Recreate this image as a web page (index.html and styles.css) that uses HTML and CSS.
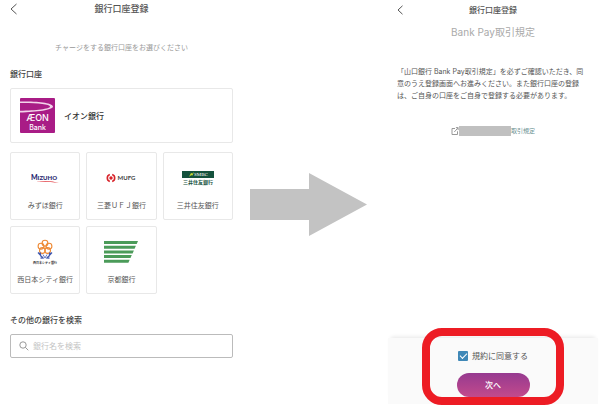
FILE: index.html
```html
<!DOCTYPE html>
<html lang="ja">
<head>
    <meta charset="UTF-8">
    <meta name="viewport" content="width=device-width, initial-scale=1.0">
    <title>銀行口座登録</title>
    <link rel="stylesheet" href="styles.css">
</head>
<body>
    <main class="steps">
        <section class="screen select">
            <header class="bar">
                <button class="back" type="button" aria-label="戻る">
                    <svg width="8" height="12" viewBox="0 0 8 12"><path d="M6.500 1 1 6l5.500 5"/></svg>
                </button>
                <h1 class="title">銀行口座登録</h1>
            </header>
            <p class="lead">チャージをする銀行口座をお選びください</p>

            <h2 class="heading">銀行口座</h2>
            <button class="card main-bank" type="button">
                <svg width="35" height="35" viewBox="0 0 35 35">
                    <rect width="35" height="35" rx="1" fill="#a91c86"/>
                    <path d="M0 3.500C18 3 33 5 33 8.500S17 14 0 14.500v-1.800C16 12.500 30 11 30 8.500S16 4.800 0 5z" fill="#f3d3ea"/>
                    <text x="17.500" y="23" class="logo-aeon">ÆON</text>
                    <text x="17.500" y="32" class="logo-bank">Bank</text>
                </svg>
                <span>イオン銀行</span>
            </button>

            <div class="banks">
                <button class="card bank" type="button">
                    <svg width="30" height="10" viewBox="0 0 30 10">
                        <text x="14" y="7" class="logo-mizuho"><tspan class="cap">M</tspan>IZUHO</text>
                        <path d="M6 9C13 7.300 22 7.500 29 10 21 8.800 13 8.500 6 9z" fill="#e0343a"/>
                    </svg>
                    <span>みずほ銀行</span>
                </button>
                <button class="card bank" type="button">
                    <svg width="32" height="10" viewBox="0 0 32 10">
                        <g fill="none" stroke="#d8232a" stroke-width="1.600">
                            <path d="M4.800 1.500a3.700 3.700 0 0 0 0 7"/>
                            <path d="M7.200 1.500a3.700 3.700 0 0 1 0 7"/>
                        </g>
                        <circle cx="6" cy="5" r="1.700" fill="#d8232a"/>
                        <text x="12.500" y="7.200" class="logo-mufg">MUFG</text>
                    </svg>
                    <span>三菱ＵＦＪ銀行</span>
                </button>
                <button class="card bank" type="button">
                    <svg width="34" height="16" viewBox="0 0 34 16">
                        <rect x="1" y="1" width="32" height="7" fill="#14523d"/>
                        <path d="M8 6.800 10 3l1.500.5L13 2l-1.500 3.500-1.300-.3z" fill="#c5d82f"/>
                        <text x="13" y="6.300" class="logo-smbc">SMBC</text>
                        <text x="17" y="14.200" class="logo-smbc-ja">三井住友銀行</text>
                    </svg>
                    <span>三井住友銀行</span>
                </button>
                <button class="card bank" type="button">
                    <svg width="30" height="26" viewBox="0 0 30 26">
                        <g fill="none" stroke="#ee8a35" stroke-width="1.100">
                            <circle cx="15" cy="4.200" r="2.900"/>
                            <circle cx="19" cy="7.200" r="2.900"/>
                            <circle cx="17.600" cy="11.500" r="2.900"/>
                            <circle cx="12.400" cy="11.500" r="2.900"/>
                            <circle cx="11" cy="7.200" r="2.900"/>
                        </g>
                        <g fill="none" stroke="#3f58b0">
                            <path d="M8 13.500 13 19l-2.500.2M10 13.500l1 4M22 13.500 17 19l2.500.2M20 13.500l-1 4" stroke-width="1.300"/>
                            <path d="M13 15.500l2 3.500 2-3.500" stroke-width=".8"/>
                        </g>
                        <text x="15" y="24.500" class="logo-ncb">西日本シティ銀行</text>
                    </svg>
                    <span>西日本シティ銀行</span>
                </button>
                <button class="card bank" type="button">
                    <svg width="34" height="22" viewBox="0 0 34 22">
                        <path d="M0 0h34l-1.300 3H0zM0 4.700h31.900l-1.300 3H0zM0 9.400h29.900l-1.300 3H0zM0 14.100h27.800l-1.300 3H0zM0 18.800h25.700l-1.300 3H0z" fill="#4b9b59"/>
                    </svg>
                    <span>京都銀行</span>
                </button>
            </div>

            <label class="heading" for="bank-name">その他の銀行を検索</label>
            <div class="search">
                <svg width="10" height="10" viewBox="0 0 10 10"><circle cx="4" cy="4" r="3.200"/><path d="m6.300 6.300 3 3"/></svg>
                <input id="bank-name" type="text" placeholder="銀行名を検索">
            </div>
        </section>

        <svg class="arrow" width="117" height="63" viewBox="0 0 117 63">
            <path d="M0 16h59V0l58 31.500L59 63V47H0z"/>
        </svg>

        <section class="screen terms">
            <header class="bar">
                <button class="back" type="button" aria-label="戻る">
                    <svg width="7" height="10" viewBox="0 0 7 10"><path d="M5.500.8 1 5l4.500 4.200"/></svg>
                </button>
                <h1 class="title">銀行口座登録</h1>
            </header>
            <h2 class="terms-title">Bank Pay取引規定</h2>
            <p class="terms-text">「山口銀行 Bank Pay取引規定」を必ずご確認いただき、同意のうえ登録画面へお進みください。また銀行口座の登録は、ご自身の口座をご自身で登録する必要があります。</p>
            <a class="terms-link" href="#">
                <svg width="8" height="8" viewBox="0 0 8 8"><path d="M4 1.500H1v6h5.500V4.300M3.300 5 7 .8M4.900.6h2.200v2.500"/></svg>
                <span class="masked"></span>取引規定
            </a>

            <footer class="agree">
                <label class="check"><input type="checkbox" checked>規約に同意する</label>
                <button class="next" type="button">次へ</button>
                <div class="highlight"></div>
            </footer>
        </section>
    </main>
</body>
</html>
```

FILE: styles.css
```css
* {
    margin: 0;
    padding: 0;
    box-sizing: border-box;
}

body {
    font-family: Inter, "Noto Sans CJK JP", sans-serif;
    font-size: 7px;
    line-height: 12px;
    background: #fff;
    color: #555;
}

button,
input {
    font: inherit;
    color: inherit;
}

button {
    border: none;
    background: none;
    cursor: pointer;
}

svg {
    display: block;
    flex-shrink: 0;
}

.steps {
    display: grid;
    grid-template-columns: 223fr 121px 210fr;
    column-gap: 17px;
    min-height: 100vh;
    padding: 0 2px 0 10px;
}

.screen {
    display: flex;
    flex-direction: column;
    min-width: 0;
}

/* header */
.bar {
    display: grid;
    grid-template-columns: 12px 1fr 12px;
    align-items: center;
    padding-top: 3px;
}

.back path {
    fill: none;
    stroke: #555;
}

.title {
    font-size: 9px;
    font-weight: 500;
    text-align: center;
}

/* bank list */
.lead {
    margin-top: 27px;
    text-align: center;
    color: #999;
}

.heading {
    font-size: 8px;
    font-weight: 500;
    color: #444;
    margin-top: 14px;
    margin-bottom: 8px;
}

.card {
    border: 1px solid #e8e8e8;
    border-radius: 2px;
    background: #fff;
}

.main-bank {
    display: flex;
    align-items: center;
    gap: 9px;
    height: 55px;
    padding: 0 9px;
    font-size: 8px;
    font-weight: 500;
    color: #333;
}

.banks {
    display: grid;
    grid-template-columns: repeat(3, 1fr);
    gap: 6px;
    margin-top: 9px;
    margin-bottom: 6px;
}

.bank {
    display: grid;
    grid-template-rows: 28px 12px;
    align-items: center;
    justify-items: center;
    align-content: start;
    gap: 8px;
    height: 68px;
    padding-top: 11px;
    white-space: nowrap;
}

.search {
    display: flex;
    align-items: center;
    gap: 4px;
    height: 24px;
    padding: 0 8px;
    border: 1px solid #bbb;
    border-radius: 2px;
}

.search svg {
    fill: none;
    stroke: #999;
}

.search input {
    flex: 1;
    min-width: 0;
    border: none;
    outline: none;
    background: none;
    font-size: 8px;
}

.search input::placeholder {
    color: #c4c4c4;
}

/* logos */
.logo-aeon,
.logo-bank {
    fill: #fff;
    font-family: Inter, sans-serif;
    text-anchor: middle;
}

.logo-aeon {
    font-size: 9px;
}

.logo-bank {
    font-size: 7px;
    font-weight: 500;
}

.logo-mizuho {
    font-family: Lato, sans-serif;
    font-size: 6px;
    font-weight: 900;
    fill: #27276f;
    text-anchor: middle;
}

.logo-mizuho .cap {
    font-size: 7px;
}

.logo-mufg {
    font-family: Lato, sans-serif;
    font-size: 6px;
    font-weight: 700;
    fill: #444;
}

.logo-smbc {
    font-family: "Liberation Serif", serif;
    font-size: 5px;
    fill: #fff;
}

.logo-smbc-ja {
    font-size: 5px;
    font-weight: 700;
    fill: #14523d;
    text-anchor: middle;
}

.logo-ncb {
    font-size: 3px;
    font-weight: 700;
    fill: #333;
    text-anchor: middle;
}

.arrow {
    margin-top: 173px;
    fill: #c3c3c3;
}

/* terms */
.terms .bar {
    padding: 4px 9px 0;
}

.terms .title {
    font-size: 8px;
}

.terms-title {
    margin-top: 9px;
    font-size: 10px;
    line-height: 14px;
    font-weight: 400;
    text-align: center;
    color: #aaa;
}

.terms-text {
    margin-top: 27px;
    padding: 0 13px 0 9px;
}

.terms-link {
    display: flex;
    align-items: center;
    justify-content: center;
    margin-top: 23px;
    font-size: 6px;
    color: #6c9292;
    text-decoration: none;
}

.terms-link svg {
    fill: none;
    stroke: #999;
}

.masked {
    width: 52px;
    height: 10px;
    background: #c0c0c0;
}

.agree {
    position: relative;
    display: flex;
    flex-direction: column;
    align-items: center;
    gap: 11px;
    margin-top: auto;
    margin-bottom: 1px;
    padding: 12px 0 7px;
    background: #fafafa;
    box-shadow: 0 -4px 4px -3px rgba(0, 0, 0, 0.1);
}

.check {
    display: flex;
    align-items: center;
    gap: 4px;
    font-size: 8px;
}

.check input {
    appearance: none;
    width: 10px;
    height: 10px;
    border-radius: 1px;
    background: #3f88b7;
    display: grid;
    place-items: center;
}

.check input:checked::before {
    content: "";
    width: 6px;
    height: 3px;
    border-left: 1px solid #fff;
    border-bottom: 1px solid #fff;
    transform: translateY(-1px) rotate(-45deg);
}

.next {
    width: 73px;
    height: 24px;
    border-radius: 12px;
    background: linear-gradient(#963a90, #c34a8c);
    color: #fff;
    font-size: 8px;
    font-weight: 500;
}

/* marker around the consent area */
.highlight {
    position: absolute;
    top: -10px;
    bottom: -1px;
    left: 50%;
    width: 142px;
    transform: translateX(-50%);
    border: 8px solid #ed1c24;
    border-radius: 20px;
    pointer-events: none;
}
```
